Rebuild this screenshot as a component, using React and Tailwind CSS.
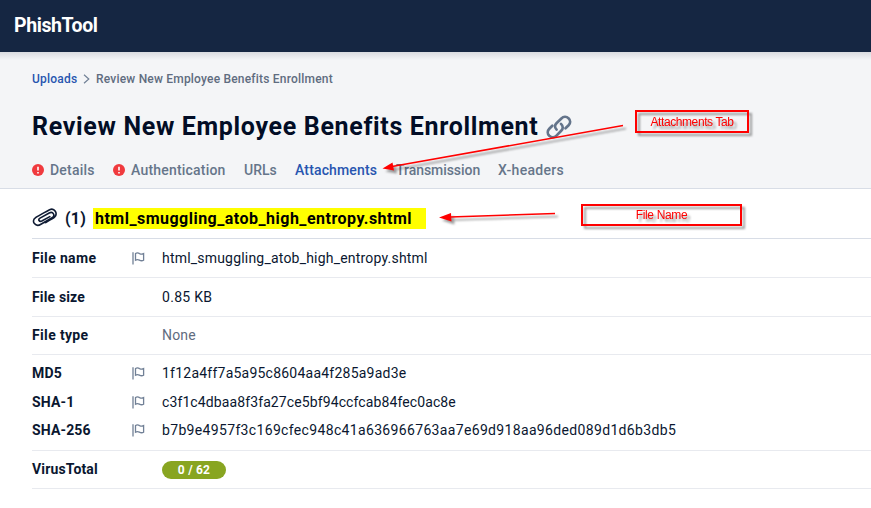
import React from "react";

function LinkIcon() {
  return (
    <svg className="h-[24px] w-[26px] shrink-0" viewBox="0 0 26 24" fill="none" stroke="#64748b" strokeWidth="2.7" strokeLinecap="round">
      <path d="M10.6 14.6 C8.3 12.3 8.6 9.9 10.7 7.9 L15.4 3.4 C17.5 1.4 20.4 1.3 22.5 3.2 C24.7 5.3 24.6 8.2 22.6 10.3 L19.5 13.3" />
      <path d="M15 8.9 C17.4 11.2 17.2 13.8 15.2 15.8 L10.5 20.6 C8.4 22.7 5.5 22.8 3.3 20.8 C1.2 18.7 1.3 15.8 3.3 13.7 L6.3 10.7" />
    </svg>
  );
}

function ClipIcon() {
  return (
    <svg className="h-[20px] w-[25px] shrink-0" viewBox="0 0 25 20" fill="none" stroke="#0f1b33" strokeWidth="1.6" strokeLinecap="round">
      <path d="M17.8 8.6 L9.8 13 C7.2 14.2 5.7 11.5 8 10.1 L17.2 5 C21.2 3 23.6 7.6 20.1 9.7 L8.9 16.3 C3.5 19.6 -1.2 13.3 3.3 9.8 C4 9.2 14.5 3.2 17.6 1.7 C22.5 -.5 26.2 5.6 22.5 9.2 C21.5 10.2 15 13.7 13.4 14.6" />
    </svg>
  );
}

function Flag() {
  return (
    <svg className="h-[13px] w-[13px]" viewBox="0 0 13 13" fill="none" stroke="#718096">
      <path d="M1 .3V12.4" strokeWidth="1.3" />
      <path d="M3.5 8.2V1.5C5 .6 6.3 .8 7.6 1.6C9 2.4 10.4 2.4 11.6 1.6V8.2C10.2 9 8.8 8.9 7.4 8.1C6.1 7.4 4.8 7.4 3.5 8.2Z" strokeWidth="1.3" />
    </svg>
  );
}

function Alert() {
  return (
    <svg className="mr-[6px] h-3 w-3" viewBox="0 0 12 12">
      <circle cx="6" cy="6" r="6" fill="#f03a3e" />
      <path d="M6 2.7V6.5M6 8V9.5" stroke="white" strokeWidth="1.6" />
    </svg>
  );
}

function Row({ label, labelTracking = "tracking-[0.15px]", flag, height, tracking = "tracking-[0.2px]", children }) {
  return (
    <div className={`flex items-center ${height}`}>
      <div className={`w-[100px] text-[14px] font-bold whitespace-nowrap ${labelTracking}`}>{label}</div>
      <div className="w-[30px]">{flag && <Flag />}</div>
      <div className={`text-[14px] whitespace-nowrap ${tracking}`}>{children}</div>
    </div>
  );
}

export default function App() {
  return (
    <div className="relative h-[508px] w-[871px] overflow-hidden bg-white font-['Roboto',sans-serif] text-[#0a1730]">
      <header className="flex h-[52px] items-center bg-[#152642] pl-[14px]">
        <span className="text-[19.5px] leading-none font-bold tracking-[-0.4px] text-white">PhishTool</span>
      </header>
      <section className="h-[137px] border-b border-[#d8dde6] bg-[#f4f5f7] pl-8">
        <div className="-ml-8 h-2 bg-linear-to-b from-[#d9dbe0] to-[#f4f5f7]" />
        <nav className="flex h-[38px] items-center text-[12px] font-medium tracking-[0.2px] text-[#5f6c80]">
          <span className="w-[45px] text-[#2855b0]">Uploads</span>
          <svg className="mr-[6px] ml-[6px] h-[10px] w-[7px]" viewBox="0 0 7 10" fill="none" stroke="#718096" strokeWidth="1.2"><path d="M1 .7L5.8 5L1 9.3" /></svg>
          <span>Review New Employee Benefits Enrollment</span>
        </nav>
        <div className="flex h-[56px] items-center gap-[8px] pt-px">
          <h1 className="pt-px text-[25px] font-bold tracking-[0.67px] whitespace-nowrap text-[#020d26]">Review New Employee Benefits Enrollment</h1>
          <LinkIcon />
        </div>
        <nav className="flex h-[32px] items-center text-[14px] font-medium tracking-[0.2px] text-[#66758a]">
          <div className="flex w-[81px] items-center"><Alert /><span>Details</span></div>
          <div className="flex w-[131px] items-center"><Alert /><span>Authentication</span></div>
          <span className="w-[51px] tracking-normal">URLs</span>
          <span className="w-[101px] tracking-[0.15px] text-[#2855b0]">Attachments</span>
          <span className="w-[102px] tracking-[-0.05px]">Transmission</span>
          <span className="tracking-[0.3px]">X-headers</span>
        </nav>
      </section>
      <main className="pl-8">
        <div className="flex h-[50px] items-center border-b border-[#d8dde6] pt-[9px]">
          <ClipIcon />
          <span className="ml-2 w-[28px] pt-[2px] text-[16px] leading-none font-bold tracking-[0.2px]">(1)</span>
          <span className="flex h-[21px] w-[333px] items-center bg-[#ffff00] pt-[2px] pl-[2px] text-[16px] leading-none font-bold tracking-[0.48px] whitespace-nowrap text-black">html_smuggling_atob_high_entropy.shtml</span>
        </div>
        <div className="border-b border-[#e8eaef]"><Row label="File name" labelTracking="tracking-[0.35px]" flag height="h-[38px]">html_smuggling_atob_high_entropy.shtml</Row></div>
        <div className="border-b border-[#e8eaef]"><Row label="File size" height="h-[38px]" tracking="tracking-[0.3px]">0.85 KB</Row></div>
        <div className="border-b border-[#e8eaef]"><Row label="File type" labelTracking="tracking-[0.35px]" height="h-[37px]"><span className="text-[#5f6c80]">None</span></Row></div>
        <div className="h-[96px] border-b border-[#e8eaef] pt-[4px]">
          <Row label="MD5" flag height="h-[29px]" tracking="tracking-[0.23px]">1f12a4ff7a5a95c8604aa4f285a9ad3e</Row>
          <Row label="SHA-1" flag height="h-[28px]" tracking="tracking-[0.11px]">c3f1c4dbaa8f3fa27ce5bf94ccfcab84fec0ac8e</Row>
          <Row label="SHA-256" flag height="h-[29px]" tracking="tracking-[0.34px]">b7b9e4957f3c169cfec948c41a636966763aa7e69d918aa96ded089d1d6b3db5</Row>
        </div>
        <div className="border-b border-[#e8eaef]">
          <Row label="VirusTotal" height="h-[37px]">
            <div className="flex h-[18px] w-[64px] items-center justify-center rounded-full bg-[#88a521] text-[12px] font-bold text-white">0 / 62</div>
          </Row>
        </div>
      </main>
      <div className="absolute top-[110px] left-[635px] flex h-[23px] w-[114px] items-center justify-center border-2 border-[#ff0000] font-['Liberation_Sans',sans-serif] text-[12px] tracking-[-0.4px] text-[#ff0000] drop-shadow-[3px_3px_1px_#00000060]">Attachments Tab</div>
      <div className="absolute top-[204px] left-[581px] flex h-[22px] w-[161px] items-center justify-center border-2 border-[#ff0000] font-['Liberation_Sans',sans-serif] text-[12px] tracking-[-0.35px] text-[#ff0000] drop-shadow-[3px_3px_1px_#00000060]">File Name</div>
      <svg className="absolute inset-0 h-[508px] w-[871px] drop-shadow-[3px_3px_1px_#00000060]" viewBox="0 0 871 508" fill="#ff0000" stroke="#ff0000">
        <path d="M623 125.5L392 166.5M555 213.5L450 217" strokeWidth="1.5" />
        <path d="M382.5 168.5L392.5 162.5L394 170.5ZM439 217.5L451 213L451.5 221.5Z" stroke="none" />
      </svg>
    </div>
  );
}
